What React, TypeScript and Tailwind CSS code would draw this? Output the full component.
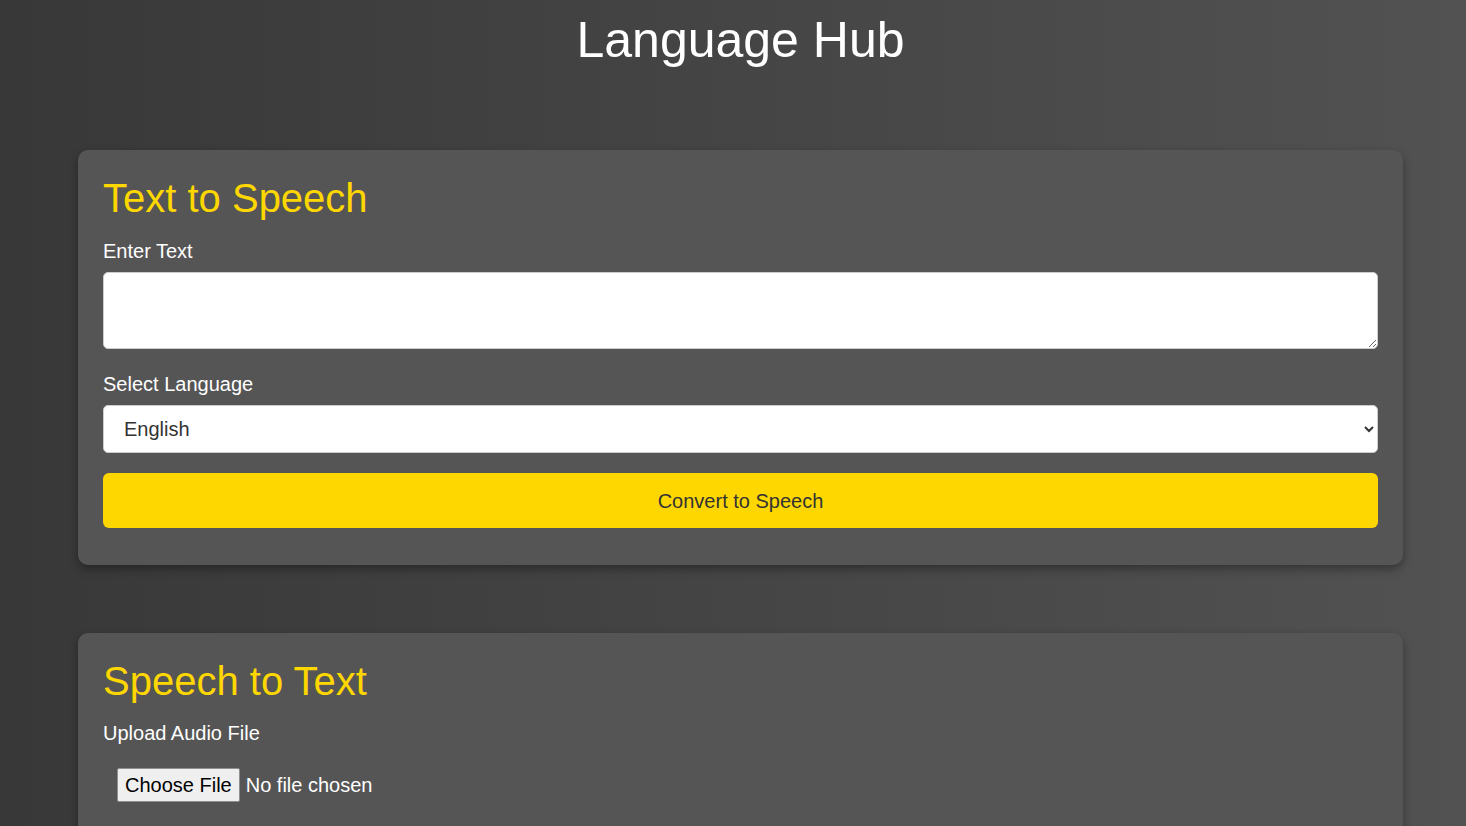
import { useState } from 'react';

const languages = [
  { code: 'en', name: 'English' },
  { code: 'es', name: 'Spanish' },
  { code: 'fr', name: 'French' },
  { code: 'de', name: 'German' },
  { code: 'hi', name: 'Hindi' },
];

function TextToSpeech() {
  const [text, setText] = useState('');
  const [lang, setLang] = useState('en');

  return (
    <div className="mx-[63px] mt-[81px] rounded-[10px] bg-[#555555] p-[25px] pb-[37px] shadow-[0_4px_10px_rgba(0,0,0,0.35)]">
      <h2 className="text-[40px] leading-[46px] text-[#FFD700]">Text to Speech</h2>
      <label htmlFor="tts-text" className="mt-[19px] block text-[20px] leading-[23px] text-white">
        Enter Text
      </label>
      <textarea
        id="tts-text"
        value={text}
        onChange={e => setText(e.target.value)}
        className="mt-[9px] block h-[77px] w-full rounded-[5px] border border-[#cccccc] bg-white p-[10px] text-[20px] text-[#333333]"
      />
      <label htmlFor="tts-lang" className="mt-[24px] block text-[20px] leading-[23px] text-white">
        Select Language
      </label>
      <select
        id="tts-lang"
        value={lang}
        onChange={e => setLang(e.target.value)}
        className="mt-[9px] block h-[48px] w-full rounded-[5px] border border-[#cccccc] bg-white px-[16px] text-[20px] text-[#333333]"
      >
        {languages.map(l => (
          <option key={l.code} value={l.code}>{l.name}</option>
        ))}
      </select>
      <button
        type="button"
        className="mt-[20px] block h-[55px] w-full rounded-[6px] bg-[#FFD700] text-[20px] text-[#333333]"
      >
        Convert to Speech
      </button>
    </div>
  );
}

function SpeechToText() {
  return (
    <div className="mx-[63px] mt-[68px] mb-[40px] rounded-[10px] bg-[#555555] p-[25px] pb-[60px] shadow-[0_4px_10px_rgba(0,0,0,0.35)]">
      <h2 className="text-[40px] leading-[46px] text-[#FFD700]">Speech to Text</h2>
      <label htmlFor="stt-file" className="mt-[18px] block text-[20px] leading-[23px] text-white">
        Upload Audio File
      </label>
      <input
        id="stt-file"
        type="file"
        accept="audio/*"
        className="mt-[11px] block px-[14px] py-[12px] text-[20px] leading-[23px] text-white file:mr-[6px] file:h-[34px] file:rounded-[2px] file:border file:border-[#8f8f8f] file:bg-[#efefef] file:px-[7px] file:text-black"
      />
    </div>
  );
}

export default function App() {
  return (
    <div className="min-h-screen bg-linear-to-r from-[#383838] to-[#525252] pl-[15px] pt-[12px] font-['Liberation_Sans',Arial,sans-serif]">
      <h1 className="text-center text-[50px] leading-[57px] text-white">Language Hub</h1>
      <TextToSpeech />
      <SpeechToText />
    </div>
  );
}
